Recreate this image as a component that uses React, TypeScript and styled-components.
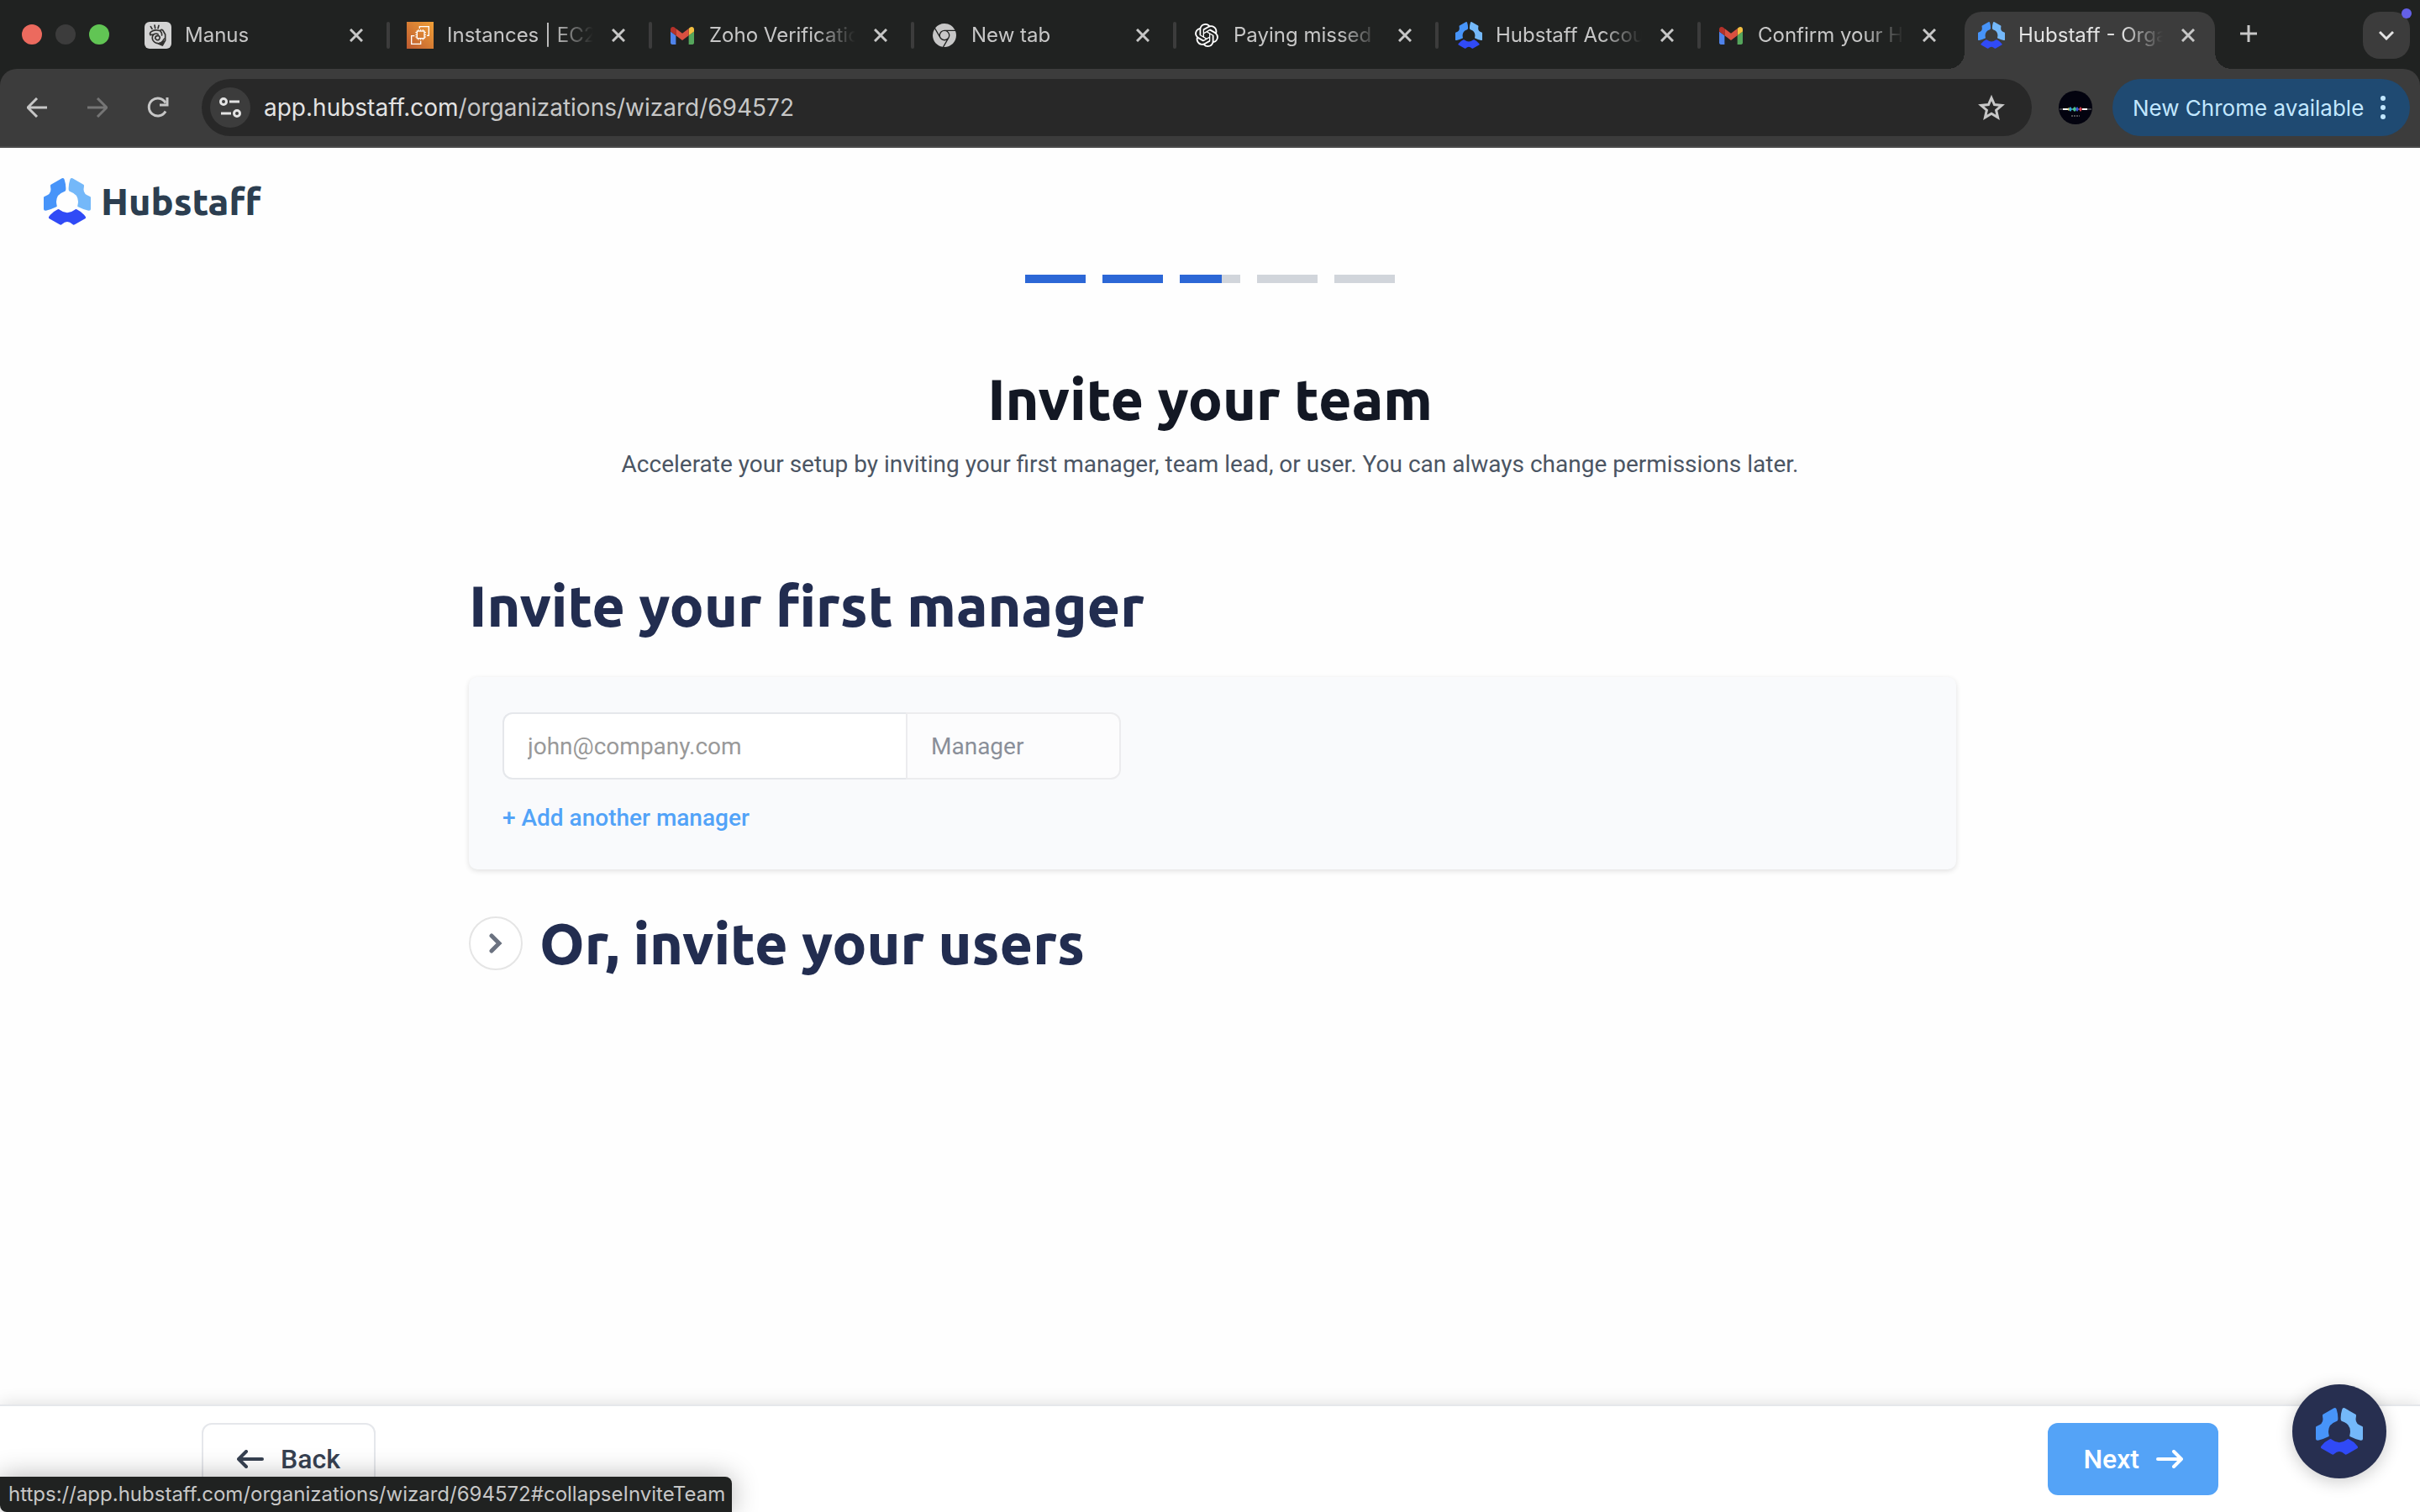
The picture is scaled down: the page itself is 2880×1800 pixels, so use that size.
import React from "react";
import styled, { createGlobalStyle, css } from "styled-components";
import { SiOpenai, SiGooglechrome } from "react-icons/si";

const brandFont = `Ubuntu, "Noto Sans", sans-serif`;
const bodyFont = `Roboto, "Liberation Sans", sans-serif`;
const chromeFont = `Inter, "Liberation Sans", sans-serif`;

const GlobalStyle = createGlobalStyle`
  *, *::before, *::after { box-sizing: border-box; }
  body { margin: 0; background: #fefefe; font-family: ${bodyFont}; }
  button, input { font: inherit; }
  h1, h2, p { margin: 0; }
  svg { display: block; flex: none; }
`;

const Window = styled.div`
  position: relative;
  display: flex;
  flex-direction: column;
  min-height: 100vh;
  overflow: hidden;
`;

/* ---------- browser frame ---------- */

const BrowserFrame = styled.header`
  background: #202221;
  font-family: ${chromeFont};
`;

const TabStrip = styled.div`
  display: flex;
  height: 82px;
  padding: 0 12px 0 26px;
`;

const TrafficLights = styled.div`
  display: flex;
  align-items: center;
  gap: 16px;
  width: 124px;
  flex: none;
`;

const Light = styled.span<{ $color: string }>`
  width: 24px;
  height: 24px;
  border-radius: 50%;
  background: ${(p) => p.$color};
`;

const TabList = styled.div`
  display: flex;
  min-width: 0;
`;

const Tab = styled.div<{ $active?: boolean; $divided?: boolean }>`
  position: relative;
  display: flex;
  align-items: center;
  width: 312px;
  padding: 2px 24px 0 22px;
  gap: 16px;
  color: #c7c7c7;

  ${(p) =>
    p.$divided &&
    css`
      &::after {
        content: "";
        position: absolute;
        right: -2px;
        top: 26px;
        width: 4px;
        height: 32px;
        border-radius: 2px;
        background: #3c3c3c;
      }
    `}

  ${(p) =>
    p.$active &&
    css`
      width: 298px;
      margin: 14px 0 0 4px;
      padding: 0 18px 12px 16px;
      border-radius: 20px 20px 0 0;
      background: #3c3c3c;
      color: #e3e3e3;
      &::before,
      &::after {
        content: "";
        position: absolute;
        bottom: 0;
        width: 20px;
        height: 20px;
      }
      &::before {
        right: 100%;
        background: radial-gradient(circle at 0 0, transparent 20px, #3c3c3c 20px);
      }
      &::after {
        left: 100%;
        background: radial-gradient(circle at 100% 0, transparent 20px, #3c3c3c 20px);
      }
    `}
`;

const TabIcon = styled.span`
  display: grid;
  place-items: center;
  width: 32px;
  height: 32px;
  flex: none;
`;

const TabTitle = styled.span`
  flex: 1;
  min-width: 0;
  overflow: hidden;
  white-space: nowrap;
  font-size: 24px;
  line-height: 32px;
  mask-image: linear-gradient(to right, #000 calc(100% - 48px), transparent);
`;

const IconButton = styled.button<{ $size?: number; $dim?: boolean }>`
  display: grid;
  place-items: center;
  width: ${(p) => p.$size ?? 48}px;
  height: ${(p) => p.$size ?? 48}px;
  flex: none;
  padding: 0;
  border: 0;
  border-radius: 50%;
  background: none;
  color: ${(p) => (p.$dim ? "#757575" : "#c7c7c7")};
`;

const NewTab = styled(IconButton)`
  margin: 16px auto 0 16px;
`;

const TabSearch = styled.button`
  position: relative;
  display: grid;
  place-items: center;
  width: 56px;
  height: 56px;
  margin-top: 14px;
  padding: 0;
  border: 0;
  border-radius: 20px;
  background: #3c3c3c;
  color: #e3e3e3;
`;

const Notice = styled.span`
  position: absolute;
  top: -4px;
  right: -2px;
  width: 12px;
  height: 12px;
  border-radius: 50%;
  background: #6460e8;
`;

const Toolbar = styled.div`
  display: flex;
  align-items: center;
  height: 94px;
  padding: 0 12px 0 20px;
  border-bottom: 2px solid #4a4a4a;
  border-radius: 20px 20px 0 0;
  background: #3c3c3c;
`;

const NavButtons = styled.div`
  display: flex;
  gap: 24px;
  margin-right: 28px;
`;

const Omnibox = styled.div`
  display: flex;
  align-items: center;
  flex: 1;
  height: 68px;
  padding: 0 24px 0 10px;
  border-radius: 34px;
  background: #282828;
`;

const SiteInfo = styled(IconButton)`
  background: #3c3c3c;
  color: #e3e3e3;
`;

const Address = styled.span`
  flex: 1;
  margin-left: 16px;
  font-size: 28px;
  line-height: 36px;
  color: #c7c7c7;
`;

const Host = styled.span`
  color: #e3e3e3;
`;

const Profile = styled.button`
  width: 40px;
  height: 40px;
  margin: 0 24px 0 32px;
  padding: 0;
  border: 0;
  border-radius: 50%;
  background: none;
`;

const UpdateButton = styled.button`
  display: flex;
  align-items: center;
  justify-content: space-between;
  width: 354px;
  height: 68px;
  padding: 0 28px 0 24px;
  border: 0;
  border-radius: 34px;
  background: #1f4a72;
  color: #c2e7ff;
  font-size: 26px;
  white-space: nowrap;
`;

/* ---------- wizard page ---------- */

const Page = styled.main`
  flex: 1;
  padding: 36px 52px;
`;

const Logo = styled.a`
  display: flex;
  align-items: center;
  gap: 12px;
  width: fit-content;
  height: 56px;
  color: #2c3e50;
  font-family: ${brandFont};
  font-size: 45px;
  font-weight: 800;
  line-height: 54px;
  text-decoration: none;
`;

const Steps = styled.ol`
  display: flex;
  justify-content: center;
  gap: 20px;
  margin: 59px 0 98px;
  padding: 0;
  list-style: none;
`;

const Step = styled.li`
  width: 72px;
  height: 10px;
  background: #d1d5db;
`;

const StepFill = styled.div`
  height: 100%;
  background: #2c67d6;
`;

const Title = styled.h1`
  font-family: ${brandFont};
  font-size: 68px;
  line-height: 80px;
  font-weight: 800;
  text-align: center;
  color: #131824;
`;

const Subtitle = styled.p`
  margin: 18px 0 108px;
  font-size: 28px;
  line-height: 40px;
  text-align: center;
  color: #4b5563;
`;

const Content = styled.div`
  max-width: 1776px;
  margin: 0 auto;
  padding-left: 6px;
`;

const SectionTitle = styled.h2`
  font-family: ${brandFont};
  font-size: 68px;
  line-height: 80px;
  font-weight: 800;
  color: #222d50;
`;

const Card = styled.form`
  margin: 45px 0 48px;
  padding: 42px 40px 41px;
  border-radius: 10px;
  background: #f9fafc;
  box-shadow: 0 2px 6px rgba(0, 0, 0, 0.12);
`;

const FieldRow = styled.div`
  display: flex;
`;

const EmailField = styled.input`
  width: 480px;
  height: 80px;
  padding: 0 28px;
  border: 2px solid #e5e7eb;
  border-right: 0;
  border-radius: 12px 0 0 12px;
  background: #fff;
  font-size: 28px;
  &::placeholder {
    color: #999;
    opacity: 1;
  }
`;

const RoleField = styled.input`
  width: 256px;
  height: 80px;
  padding: 0 28px;
  border: 2px solid #ececee;
  border-radius: 0 12px 12px 0;
  background: #fcfcfd;
  font-size: 28px;
  color: #8a8f99;
`;

const AddButton = styled.button`
  display: block;
  margin-top: 26px;
  padding: 0;
  border: 0;
  background: none;
  color: #52a3f8;
  font-size: 28px;
  line-height: 40px;
  font-weight: 500;
`;

const Collapsed = styled.div`
  display: flex;
  align-items: center;
  gap: 20px;
`;

const ExpandButton = styled.button`
  display: grid;
  place-items: center;
  width: 64px;
  height: 64px;
  padding: 0;
  border: 2px solid #e5e5e5;
  border-radius: 50%;
  background: #fff;
  color: #6b7280;
`;

const Footer = styled.footer`
  display: flex;
  justify-content: space-between;
  padding: 20px 240px;
  border-top: 2px solid #e5e7eb;
  background: #fff;
  box-shadow: 0 0 20px rgba(0, 0, 0, 0.14);
`;

const FooterButton = styled.button<{ $primary?: boolean }>`
  display: flex;
  align-items: center;
  gap: 20px;
  height: 86px;
  padding: 0 40px;
  border: 2px solid ${(p) => (p.$primary ? "#54a3f7" : "#e5e7eb")};
  border-radius: 12px;
  background: ${(p) => (p.$primary ? "#54a3f7" : "#fff")};
  color: ${(p) => (p.$primary ? "#fff" : "#374151")};
  font-size: 32px;
  font-weight: 500;
`;

const HelpWidget = styled.button`
  position: absolute;
  right: 40px;
  bottom: 40px;
  display: grid;
  place-items: center;
  width: 112px;
  height: 112px;
  padding: 0;
  border: 0;
  border-radius: 50%;
  background: #272f50;
  box-shadow: 0 4px 20px rgba(0, 0, 0, 0.2);
`;

const StatusBubble = styled.div`
  position: absolute;
  left: 0;
  bottom: 0;
  height: 42px;
  padding: 0 8px 0 10px;
  border-radius: 0 8px 0 8px;
  background: #202221;
  box-shadow: 0 0 32px rgba(0, 0, 0, 0.3);
  color: #c7c7c7;
  font-family: ${chromeFont};
  font-size: 24px;
  line-height: 42px;
`;

/* ---------- drawings ---------- */

const HubstaffMark = ({ size }: { size: number }) => {
  const wing =
    "M24 26Q24 24 26 23L65 1Q72 -2 74 5Q80 24 79 41Q79 46 74 48Q46 57 45 84Q45 90 47 98Q48 101 45 103Q26 113 8 116Q0 117 0 111V69Q0 66 4 65Q28 58 25 37Q24 31 24 26Z";
  return (
    <svg width={size} height={size} viewBox="0 0 168 168" aria-hidden="true">
      <path d={wing} fill="#4794f9" />
      <path d={wing} fill="#74b8f9" transform="matrix(-1 0 0 1 168 0)" />
      <path
        d="M50 112Q54 110 57 113Q84 134 111 113Q114 110 118 112Q137 121 149 137Q152 142 148 145L111 166Q106 169 103 165Q84 147 65 165Q62 169 57 166L20 145Q16 142 19 137Q31 121 50 112Z"
        fill="#304af6"
      />
    </svg>
  );
};

const GmailIcon = () => (
  <svg width="28" height="21" viewBox="52 42 88 66">
    <path fill="#4f83ea" d="M58 108h14V74L52 59v43c0 3.32 2.69 6 6 6" />
    <path fill="#55a65c" d="M120 108h14c3.32 0 6-2.69 6-6V59l-20 15" />
    <path fill="#f2bf41" d="M120 48v26l20-15v-8c0-7.42-8.47-11.65-14.4-7.2" />
    <path fill="#d95040" d="M72 74V48l24 18 24-18v26L96 92" />
    <path fill="#b5312a" d="M52 51v8l20 15V48l-5.6-4.2c-5.94-4.45-14.4-.22-14.4 7.2" />
  </svg>
);

const ManusIcon = () => (
  <svg width="32" height="32" viewBox="0 0 96 96" fill="none" stroke="#30302e" strokeLinecap="round" strokeLinejoin="round">
    <rect width="96" height="96" rx="18" fill="#d3d3d3" stroke="none" />
    <path strokeWidth="5" d="M22 17l5 8M36 12l2 11M51 13l-3 10" />
    <path
      strokeWidth="5"
      d="M24 35Q17 41 21 47Q28 46 34 44Q25 52 29 64Q35 75 48 77Q58 81 64 84L74 66V45L66 31Q60 25 56 32L45 30Q34 28 24 35M34 44Q42 40 48 44M56 32Q63 40 62 48M38 59Q38 49 49 49Q59 55 52 63Q44 69 38 59"
    />
    <path strokeWidth="3" fill="#30302e" d="M70 60L64 84L48 77Q62 76 70 60Z" />
  </svg>
);

const Ec2Icon = () => (
  <svg width="32" height="32" viewBox="0 0 96 96" fill="none" stroke="#fff" strokeWidth="4">
    <defs>
      <linearGradient id="ec2" x1="0" y1="1" x2="1" y2="0">
        <stop offset="0" stopColor="#bd5a30" />
        <stop offset="1" stopColor="#f0a037" />
      </linearGradient>
    </defs>
    <rect width="96" height="96" fill="url(#ec2)" stroke="none" />
    <rect x="37" y="33" width="26" height="26" />
    <path d="M42 33v-6M50 33v-6M58 33v-6M42 65v-6M50 65v-6M58 65v-6M37 38h-6M37 46h-6M37 54h-6M69 38h-6M69 46h-6M69 54h-6" strokeWidth="3" />
    <path d="M46 24V17H79V49H72M28 50H17V79H50V68" />
  </svg>
);

const CloseIcon = () => (
  <svg width="16" height="16" viewBox="0 0 16 16" stroke="currentColor" strokeWidth="3">
    <path d="M1 1l14 14M15 1L1 15" />
  </svg>
);

const PlusIcon = () => (
  <svg width="20" height="20" viewBox="0 0 20 20" stroke="currentColor" strokeWidth="3">
    <path d="M10 0v20M0 10h20" />
  </svg>
);

const ChevronDown = () => (
  <svg width="18" height="12" viewBox="0 0 18 12" fill="none" stroke="currentColor" strokeWidth="3">
    <path d="M1 2l8 8 8-8" />
  </svg>
);

const ArrowIcon = ({ flip }: { flip?: boolean }) => (
  <svg width="24" height="24" viewBox="0 0 24 24" fill="none" stroke="currentColor" strokeWidth="3">
    <path d={flip ? "M0 12h22M12 1l11 11-11 11" : "M24 12H2M12 1L1 12l11 11"} />
  </svg>
);

const ReloadIcon = () => (
  <svg width="26" height="26" viewBox="0 0 26 26" fill="none" stroke="currentColor" strokeWidth="3">
    <path d="M22 17.500A10.500 10.500 0 1 1 22 7.500" />
    <path d="M24 1v9h-9" />
  </svg>
);

const TuneIcon = () => (
  <svg width="26" height="26" viewBox="0 0 26 26" fill="none" stroke="currentColor" strokeWidth="3">
    <circle cx="5" cy="6" r="3.500" />
    <path d="M12 6h12M2 20h12" />
    <circle cx="21" cy="20" r="3.500" />
  </svg>
);

const StarIcon = () => (
  <svg width="32" height="32" viewBox="0 0 32 32" fill="none" stroke="currentColor" strokeWidth="3">
    <path d="M16 4.500l3.500 8.100 8.800.800-6.700 5.800 2 8.600L16 23.300l-7.600 4.500 2-8.600-6.700-5.800 8.800-.800z" />
  </svg>
);

const AvatarIcon = () => (
  <svg width="40" height="40" viewBox="0 0 40 40">
    <circle cx="20" cy="20" r="20" fill="#03030f" />
    <path d="M1 22h38" stroke="#777" strokeWidth="1" />
    <path d="M5 22h6M28 22h6" stroke="#fff" strokeWidth="2" />
    <path d="M10 22l2-2 2 2-2 2z" fill="#e3d37a" />
    <path d="M12 22l2-3 2 3-2 3z" fill="#35a7d8" />
    <path d="M16 22l3-3 3 3-3 3z" fill="#4bbf8f" />
    <path d="M20 22l2-3 2 3-2 3z" fill="#3c55d8" />
    <path d="M24 22l2-3 2 3-2 3z" fill="#d8404b" />
    <path d="M15 30h10" stroke="#999" strokeWidth="1" strokeDasharray="2 1" />
  </svg>
);

const DotsIcon = () => (
  <svg width="8" height="30" viewBox="0 0 8 30" fill="currentColor">
    <circle cx="4" cy="4" r="3" />
    <circle cx="4" cy="15" r="3" />
    <circle cx="4" cy="26" r="3" />
  </svg>
);

const ChevronRight = () => (
  <svg width="18" height="24" viewBox="0 0 18 24" fill="none" stroke="currentColor" strokeWidth="5" strokeLinecap="round">
    <path d="M4 3l9 9-9 9" />
  </svg>
);

const LongArrow = ({ flip }: { flip?: boolean }) => (
  <svg width="32" height="22" viewBox="0 0 32 22" fill="none" stroke="currentColor" strokeWidth="4" strokeLinecap="round" strokeLinejoin="round">
    <path d={flip ? "M30 11H2M11 2l-9 9 9 9" : "M2 11h28M21 2l9 9-9 9"} />
  </svg>
);

const tabs = [
  { title: "Manus", icon: <ManusIcon /> },
  { title: "Instances | EC2", icon: <Ec2Icon /> },
  { title: "Zoho Verification", icon: <GmailIcon /> },
  { title: "New tab", icon: <SiGooglechrome size={28} /> },
  { title: "Paying missed", icon: <SiOpenai size={28} color="#fff" /> },
  { title: "Hubstaff Account", icon: <HubstaffMark size={32} /> },
  { title: "Confirm your Hub", icon: <GmailIcon /> },
  { title: "Hubstaff - Organ", icon: <HubstaffMark size={32} /> },
];

const steps = [100, 100, 69, 0, 0];

export default function App() {
  const active = tabs.length - 1;
  return (
    <Window>
      <GlobalStyle />
      <BrowserFrame>
        <TabStrip>
          <TrafficLights>
            <Light $color="#ec6a5e" />
            <Light $color="#3c3c3c" />
            <Light $color="#61c554" />
          </TrafficLights>
          <TabList>
            {tabs.map((tab, i) => (
              <Tab key={i} $active={i === active} $divided={i < active - 1}>
                <TabIcon>{tab.icon}</TabIcon>
                <TabTitle>{tab.title}</TabTitle>
                <IconButton $size={28} aria-label={`Close ${tab.title}`}>
                  <CloseIcon />
                </IconButton>
              </Tab>
            ))}
          </TabList>
          <NewTab aria-label="New tab">
            <PlusIcon />
          </NewTab>
          <TabSearch aria-label="Search tabs">
            <ChevronDown />
            <Notice />
          </TabSearch>
        </TabStrip>
        <Toolbar>
          <NavButtons>
            <IconButton aria-label="Back">
              <ArrowIcon />
            </IconButton>
            <IconButton aria-label="Forward" $dim>
              <ArrowIcon flip />
            </IconButton>
            <IconButton aria-label="Reload">
              <ReloadIcon />
            </IconButton>
          </NavButtons>
          <Omnibox>
            <SiteInfo aria-label="Site information">
              <TuneIcon />
            </SiteInfo>
            <Address>
              <Host>app.hubstaff.com</Host>/organizations/wizard/694572
            </Address>
            <IconButton aria-label="Bookmark this tab">
              <StarIcon />
            </IconButton>
          </Omnibox>
          <Profile aria-label="Profile">
            <AvatarIcon />
          </Profile>
          <UpdateButton>
            New Chrome available
            <DotsIcon />
          </UpdateButton>
        </Toolbar>
      </BrowserFrame>

      <Page>
        <Logo href="#">
          <HubstaffMark size={56} />
          Hubstaff
        </Logo>
        <Steps aria-label="Setup progress">
          {steps.map((done, i) => (
            <Step key={i}>
              <StepFill style={{ width: `${done}%` }} />
            </Step>
          ))}
        </Steps>
        <Title>Invite your team</Title>
        <Subtitle>
          Accelerate your setup by inviting your first manager, team lead, or user. You can always change permissions later.
        </Subtitle>
        <Content>
          <SectionTitle>Invite your first manager</SectionTitle>
          <Card onSubmit={(e) => e.preventDefault()}>
            <FieldRow>
              <EmailField type="email" aria-label="Manager email" placeholder="john@company.com" />
              <RoleField aria-label="Role" value="Manager" readOnly />
            </FieldRow>
            <AddButton type="button">+ Add another manager</AddButton>
          </Card>
          <Collapsed>
            <ExpandButton aria-label="Show user invites" aria-expanded={false}>
              <ChevronRight />
            </ExpandButton>
            <SectionTitle>Or, invite your users</SectionTitle>
          </Collapsed>
        </Content>
      </Page>

      <Footer>
        <FooterButton>
          <LongArrow flip />
          Back
        </FooterButton>
        <FooterButton $primary>
          Next
          <LongArrow />
        </FooterButton>
      </Footer>

      <HelpWidget aria-label="Help">
        <HubstaffMark size={56} />
      </HelpWidget>
      <StatusBubble>https://app.hubstaff.com/organizations/wizard/694572#collapseInviteTeam</StatusBubble>
    </Window>
  );
}
